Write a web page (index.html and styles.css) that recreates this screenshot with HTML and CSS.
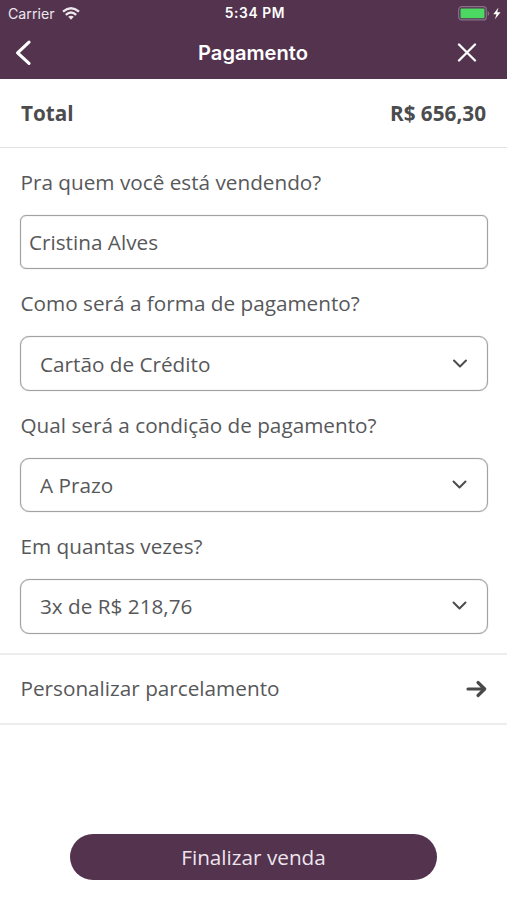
FILE: index.html
```html
<!DOCTYPE html>
<html lang="pt-BR">
<head>
<meta charset="utf-8">
<title>Pagamento</title>
<link rel="stylesheet" href="styles.css">
</head>
<body>
<header class="header">
  <div class="status">
    <div class="carrier"><span>Carrier</span>
      <svg width="18" height="13" viewBox="0 0 18 13" fill="none" stroke="currentColor" stroke-width="2.4"><path d="M1 4.7Q9-2 17 4.7M3.8 7.8Q9 3.4 14.2 7.8"/><path d="M6.2 9.8Q9 7.6 11.8 9.8L9 12.7Z" fill="currentColor" stroke="none"/></svg>
    </div>
    <span class="time">5:34 PM</span>
    <div class="power">
      <svg width="44" height="15" viewBox="0 0 44 15"><rect x=".7" y=".7" width="27.6" height="13.2" rx="3" fill="none" stroke="#88708a" stroke-width="1.2"/><rect x="2.5" y="2.5" width="24" height="9.7" rx="1" fill="#4bd964"/><path d="M29.7 5v5Q31.2 9.5 31.2 7.5T29.7 5Z" fill="#88708a"/><path d="M40.5 1.5L35.3 8.3H38.5L36.9 13.2L42.6 6.3H39.2Z" fill="#fff"/></svg>
    </div>
  </div>
  <nav class="nav">
    <svg width="20" height="30" viewBox="0 0 20 30" fill="none" stroke="currentColor" stroke-width="3.2" stroke-linecap="round" stroke-linejoin="round"><path d="M15 4.2L3.6 14.8L15 25.4"/></svg>
    <h1 class="title">Pagamento</h1>
    <svg class="close" width="20" height="20" viewBox="0 0 20 20" fill="none" stroke="currentColor" stroke-width="2.3" stroke-linecap="round"><path d="M2 1.5L18 17.5M18 1.5L2 17.5"/></svg>
  </nav>
</header>
<main>
  <div class="row total"><span>Total</span><span>R$ 656,30</span></div>
  <form class="fields">
    <div class="field"><div class="label">Pra quem você está vendendo?</div><div class="box input">Cristina Alves</div></div>
    <div class="field"><div class="label">Como será a forma de pagamento?</div>
      <div class="box select"><span>Cartão de Crédito</span><svg width="16" height="10" viewBox="0 0 16 10" fill="none" stroke="currentColor" stroke-width="2" stroke-linecap="round" stroke-linejoin="round"><path d="M2 1.5L8 7.5L14 1.5"/></svg></div></div>
    <div class="field"><div class="label">Qual será a condição de pagamento?</div>
      <div class="box select"><span>A Prazo</span><svg width="16" height="10" viewBox="0 0 16 10" fill="none" stroke="currentColor" stroke-width="2" stroke-linecap="round" stroke-linejoin="round"><path d="M1.5 1.5L7.5 7.5L13.5 1.5"/></svg></div></div>
    <div class="field"><div class="label">Em quantas vezes?</div>
      <div class="box select"><span>3x de R$ 218,76</span><svg width="16" height="10" viewBox="0 0 16 10" fill="none" stroke="currentColor" stroke-width="2" stroke-linecap="round" stroke-linejoin="round"><path d="M1.5 1.5L7.5 7.5L13.5 1.5"/></svg></div></div>
  </form>
  <div class="row custom"><span>Personalizar parcelamento</span>
    <svg width="21" height="18" viewBox="0 0 21 18" fill="none" stroke="currentColor" stroke-width="3.2" stroke-linecap="round" stroke-linejoin="round"><path d="M2 9H18.5M12 2.5L18.7 9L12 15.5"/></svg>
  </div>
</main>
<footer class="footer"><button class="submit" type="button">Finalizar venda</button></footer>
</body>
</html>
```
FILE: styles.css
```css
* { box-sizing: border-box; }
body {
  margin: 0;
  height: 900px;
  display: flex;
  flex-direction: column;
  background: #fff;
  color: #57585a;
  font: 20.72px/28px "Open Sans", sans-serif;
}
svg { display: block; flex: none; }
.header {
  height: 79px;
  background: #53334e;
  color: #fff;
  font-family: Inter, sans-serif;
}
.status {
  height: 27px;
  display: grid;
  grid-template-columns: 1fr auto 1fr;
  align-items: center;
  padding: 0 5px 0 8px;
  font-size: 14.2px;
  line-height: 27px;
}
.carrier { display: flex; align-items: center; gap: 7px; color: #eee6ed; }
.time { font-weight: 600; font-size: 13.8px; letter-spacing: .6px; }
.power { display: flex; justify-content: flex-end; }
.nav {
  height: 52px;
  display: grid;
  grid-template-columns: 1fr auto 1fr;
  align-items: center;
  padding: 0 15px 0 14px;
}
.title { margin: 0; font-size: 20.1px; font-weight: 600; line-height: 28px; }
.close { justify-self: end; margin-right: 15px; }
.row {
  display: flex;
  align-items: center;
  justify-content: space-between;
  padding: 0 20px 0 20.5px;
}
.total {
  height: 69px;
  padding: 0 21px;
  border-bottom: 1px solid #e2e2e2;
  font-weight: 700;
  color: #4b4c4e;
}
.fields { padding: 20px 19px 19px 20px; display: grid; gap: 20px; }
.field { display: grid; gap: 19px; }
.label { padding-left: .5px; }
.box {
  height: 54.4px;
  display: flex;
  align-items: center;
  border: 1px solid #a2a2a2;
  border-radius: 6px;
  box-shadow: 0 0 1px #a2a2a2, inset 0 0 1px #a2a2a2;
}
.input { padding: 0 8px; }
.select {
  justify-content: space-between;
  padding: 0 19px;
  border-radius: 9px;
}
.select svg { color: #4b4c4e; }
.custom {
  height: 72px;
  border-top: 2px solid #ededed;
  border-bottom: 2px solid #ededed;
}
.custom span { margin-top: -1px; }
.custom svg { color: #48494b; }
.footer { margin-top: auto; padding: 0 70px 20px; }
.submit {
  display: block;
  width: 367px;
  height: 46px;
  padding: 0;
  border: 0;
  border-radius: 23px;
  background: #53334e;
  color: #eee4ed;
  font: inherit;
}
```
